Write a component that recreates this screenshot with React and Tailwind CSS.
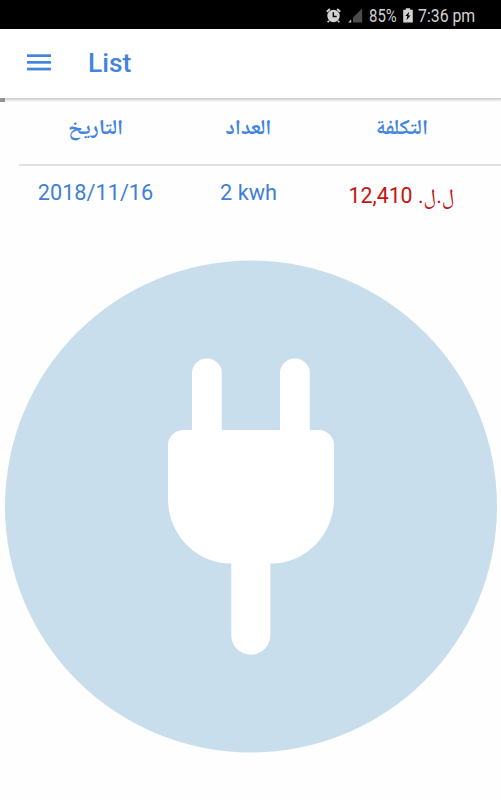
const rows = [
  { date: '2018/11/16', meter: '2 kwh', cost: 'ل.ل. 12,410' },
];

function AlarmIcon() {
  return (
    <svg width="15" height="16" viewBox="0 0 15 16" fill="none">
      <circle cx="7.5" cy="8" r="6.2" fill="#d2d2d2" />
      <path d="M0.8 3.8 3.9 1M14.2 3.8 11.1 1" stroke="#d2d2d2" strokeWidth="1.9" />
      <path d="M3 12.8 1.7 14.3M12 12.8l1.3 1.5" stroke="#d2d2d2" strokeWidth="1.7" />
      <path d="M7.3 4.2v4.3h3.4" stroke="#000" strokeWidth="1.4" />
    </svg>
  );
}

function SignalIcon() {
  return (
    <svg width="15" height="15" viewBox="0 0 15 15">
      <path d="M14.2 0.5v14H5V9.6Z" fill="#4c4c4c" />
      <path d="M3.2 11.6v2.9H0.3Z" fill="#d2d2d2" />
    </svg>
  );
}

function BatteryIcon() {
  return (
    <svg width="10" height="15" viewBox="0 0 10 15">
      <path d="M2.8 0.3h4.4v1.5h2.6v12.8H0.2V1.8h2.6Z" fill="#d2d2d2" />
      <path d="M6.2 3.8 2.3 8h2.1l-1 4.2L7.6 7.4H5.4Z" fill="#000" />
    </svg>
  );
}

function StatusBar() {
  return (
    <div className="flex h-[29px] items-center justify-end bg-black pr-[26px] pt-[2px] text-[18px] text-[#d2d2d2]">
      <AlarmIcon />
      <span className="ml-[7px] flex">
        <SignalIcon />
      </span>
      <span className="ml-[6px] flex w-[28px]">
        <span className="origin-left scale-x-[0.83] whitespace-nowrap">85%</span>
      </span>
      <span className="ml-[6px] flex">
        <BatteryIcon />
      </span>
      <span className="ml-[5px] flex w-[57px]">
        <span className="origin-left scale-x-[0.88] whitespace-nowrap">7:36 pm</span>
      </span>
    </div>
  );
}

function Toolbar() {
  return (
    <header className="flex h-[68.5px] items-center bg-white pl-[27px]">
      <button className="mb-[2px] flex" aria-label="Menu">
        <svg width="24" height="17" viewBox="0 0 24 17" fill="#4384df">
          <rect y="0.3" width="24" height="2.7" />
          <rect y="7" width="24" height="2.7" />
          <rect y="13.7" width="24" height="2.7" />
        </svg>
      </button>
      <h1 className="ml-[37px] pt-[2px] text-[26.4px] font-medium text-[#4384df]">List</h1>
    </header>
  );
}

function PlugLogo() {
  return (
    <svg width="501" height="494" viewBox="0 260 501 494">
      <circle cx="251" cy="506.5" r="246" fill="#c9deec" />
      <g fill="#fff">
        <rect x="192" y="358.5" width="29.8" height="90" rx="14.9" />
        <rect x="280" y="358.5" width="29.8" height="90" rx="14.9" />
        <path d="M183 430H319C327 430 334 437 334 445V499C334 535 305 563.5 272 563.5H230C197 563.5 168 535 168 499V445C168 437 175 430 183 430Z" />
        <rect x="231.3" y="540" width="39" height="114.7" rx="19.5" />
      </g>
    </svg>
  );
}

export default function App() {
  return (
    <div className="h-[800px] w-[501px] overflow-hidden bg-[#fefefe] font-[Roboto,'Noto_Naskh_Arabic','Noto_Sans_Arabic','DejaVu_Sans',sans-serif]">
      <StatusBar />
      <Toolbar />

      {/* Toolbar shadow and loading progress */}
      <div className="flex h-[4.5px] bg-linear-to-b from-[#c8c8c8] to-[#fefefe]">
        <div className="w-[5px] bg-[#929292]" />
      </div>

      <main className="pl-[19px] text-[#3f7fd6]">
        <div className="grid h-[64px] grid-cols-[153px_153px_153px] border-b-2 border-[#e2e2e2] pt-[12px] text-center font-['Noto_Naskh_Arabic_UI','Noto_Naskh_Arabic','Noto_Sans_Arabic',sans-serif] text-[21.3px] font-bold leading-[30px] text-[#4384df]">
          <div lang="ar">التاريخ</div>
          <div lang="ar">العداد</div>
          <div lang="ar">التكلفة</div>
        </div>
        {rows.map((row) => (
          <div key={row.date} className="grid h-[94px] grid-cols-[153px_153px_153px] pt-[12px] text-center text-[21.7px] leading-[30px]">
            <div>{row.date}</div>
            <div>{row.meter}</div>
            <div dir="rtl" className="pt-[3px] text-[21.3px] tracking-[-0.2px] text-[#c81212]">{row.cost}</div>
          </div>
        ))}
      </main>

      <PlugLogo />
    </div>
  );
}
